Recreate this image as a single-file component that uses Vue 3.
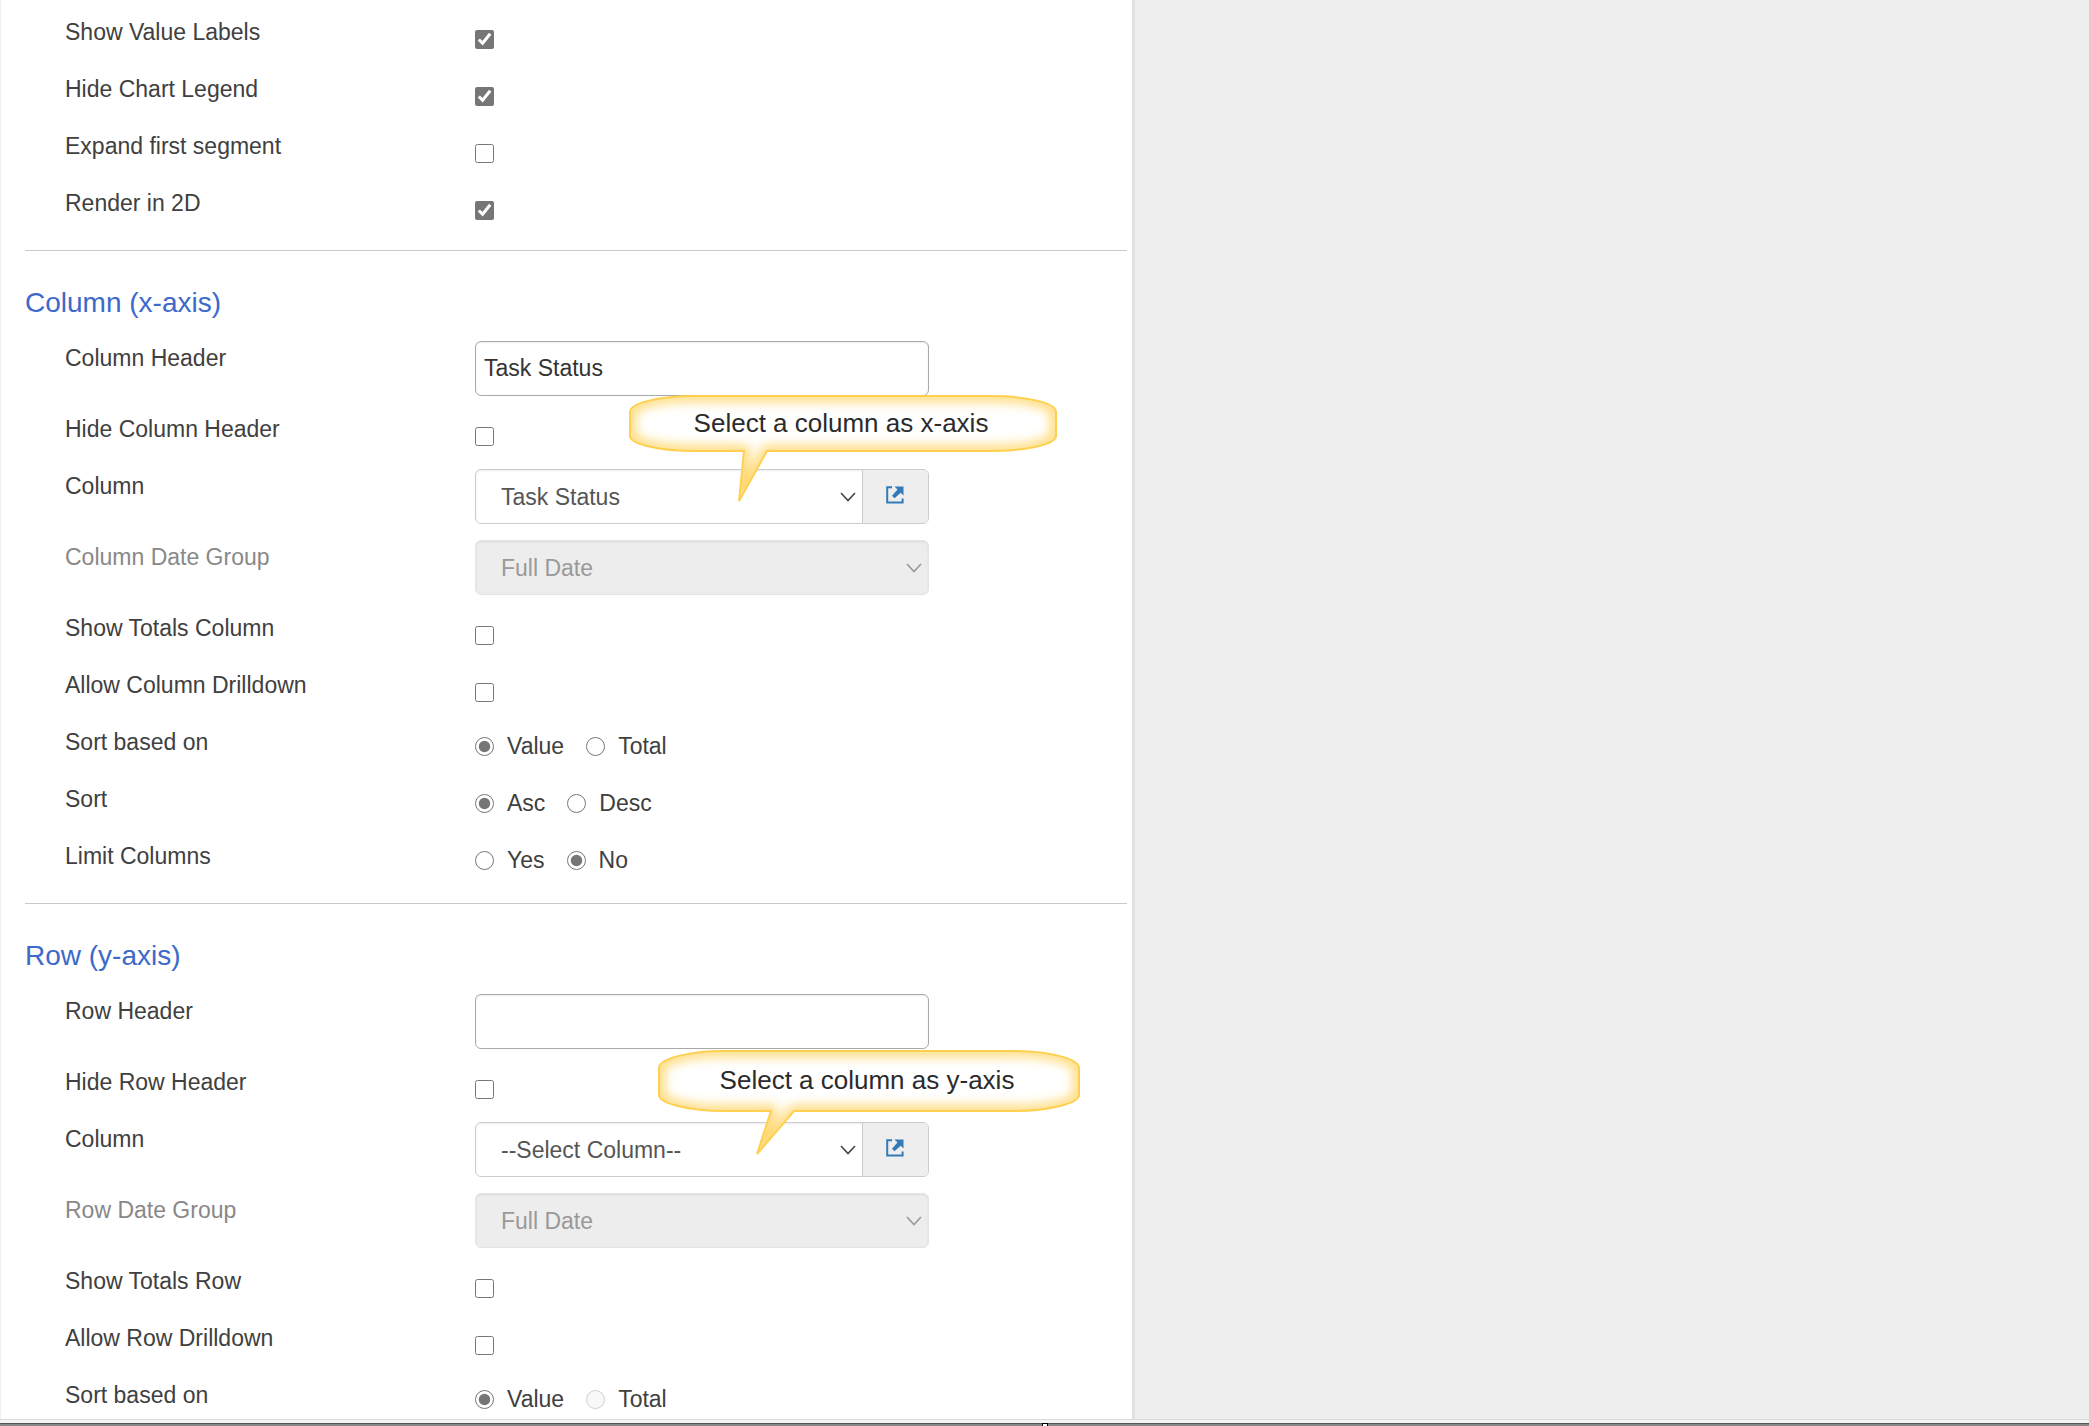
<script setup>
import { reactive } from 'vue'

const sections = reactive([
  {
    id: 'display',
    rows: [
      { type: 'check', label: 'Show Value Labels', value: true },
      { type: 'check', label: 'Hide Chart Legend', value: true },
      { type: 'check', label: 'Expand first segment', value: false },
      { type: 'check', label: 'Render in 2D', value: true },
    ],
  },
  {
    id: 'column',
    title: 'Column (x-axis)',
    rows: [
      { type: 'text', label: 'Column Header', value: 'Task Status' },
      { type: 'check', label: 'Hide Column Header', value: false },
      { type: 'select', label: 'Column', value: 'Task Status', picker: true, tip: 'x' },
      { type: 'select', label: 'Column Date Group', value: 'Full Date', disabled: true },
      { type: 'check', label: 'Show Totals Column', value: false },
      { type: 'check', label: 'Allow Column Drilldown', value: false },
      { type: 'radio', label: 'Sort based on', value: 'Value', options: ['Value', 'Total'] },
      { type: 'radio', label: 'Sort', value: 'Asc', options: ['Asc', 'Desc'] },
      { type: 'radio', label: 'Limit Columns', value: 'No', options: ['Yes', 'No'] },
    ],
  },
  {
    id: 'row',
    title: 'Row (y-axis)',
    rows: [
      { type: 'text', label: 'Row Header', value: '' },
      { type: 'check', label: 'Hide Row Header', value: false },
      { type: 'select', label: 'Column', value: '--Select Column--', picker: true, tip: 'y' },
      { type: 'select', label: 'Row Date Group', value: 'Full Date', disabled: true },
      { type: 'check', label: 'Show Totals Row', value: false },
      { type: 'check', label: 'Allow Row Drilldown', value: false },
      { type: 'radio', label: 'Sort based on', value: 'Value', options: ['Value', 'Total'], locked: ['Total'] },
    ],
  },
])

const tips = {
  x: {
    text: 'Select a column as x-axis',
    width: 428,
    height: 112,
    path: 'M66 1 H362 C398 1 427 8 427 17 V41 C427 49 398 56 362 56 H138 L110 106 L115 56 H66 C30 56 1 49 1 41 V17 C1 8 30 1 66 1 Z',
  },
  y: {
    text: 'Select a column as y-axis',
    width: 422,
    height: 112,
    path: 'M66 1 H356 C392 1 421 9 421 18 V45 C421 53 392 61 356 61 H136 L99 104 L113 61 H66 C30 61 1 53 1 45 V18 C1 9 30 1 66 1 Z',
  },
}

const fieldId = (section, index) => `${section.id}-${index}`
</script>

<template>
  <div class="page">
    <div class="workspace">
      <form class="panel" @submit.prevent>
        <section v-for="section in sections" :key="section.id" class="section">
          <h2 v-if="section.title" class="title">{{ section.title }}</h2>
          <div
            v-for="(row, i) in section.rows"
            :key="i"
            class="row"
            :class="[`row-${row.type}`, { 'row-disabled': row.disabled }]"
          >
            <component
              :is="row.type === 'radio' ? 'span' : 'label'"
              :id="`${fieldId(section, i)}-label`"
              class="label"
              :for="row.type === 'radio' ? undefined : fieldId(section, i)"
            >{{ row.label }}</component>

            <input
              v-if="row.type === 'check'"
              :id="fieldId(section, i)"
              v-model="row.value"
              class="box"
              type="checkbox"
            />

            <input
              v-else-if="row.type === 'text'"
              :id="fieldId(section, i)"
              v-model="row.value"
              class="field text"
              type="text"
            />

            <div
              v-else-if="row.type === 'radio'"
              class="options"
              role="radiogroup"
              :aria-labelledby="`${fieldId(section, i)}-label`"
            >
              <label v-for="option in row.options" :key="option" class="option">
                <input
                  v-model="row.value"
                  class="dot"
                  type="radio"
                  :name="fieldId(section, i)"
                  :value="option"
                  :disabled="row.locked?.includes(option)"
                />
                {{ option }}
              </label>
            </div>

            <div v-else class="field group">
              <div class="select-wrap">
                <select :id="fieldId(section, i)" v-model="row.value" class="select" :disabled="row.disabled">
                  <option>{{ row.value }}</option>
                </select>
                <svg class="chevron" viewBox="0 0 16 10" aria-hidden="true">
                  <path d="M1 1 L8 8.500 L15 1" fill="none" stroke="currentColor" stroke-width="1.600" />
                </svg>
              </div>
              <button v-if="row.picker" class="picker" type="button" aria-label="Open column">
                <svg viewBox="0 0 18 18" width="18" height="18" aria-hidden="true">
                  <path d="M6 1.200 H1.200 V16.600 H16.600 V12.500" fill="none" stroke="currentColor" stroke-width="2" />
                  <path d="M8.500 0.500 H17.500 V9.500 L14.700 6.700 L8.500 12.200 L6 9.700 L11.500 3.500 Z" fill="currentColor" />
                </svg>
              </button>
              <div v-if="row.tip" class="tip" :class="`tip-${row.tip}`">
                <svg
                  class="tip-shape"
                  :width="tips[row.tip].width"
                  :height="tips[row.tip].height"
                  aria-hidden="true"
                >
                  <defs>
                    <clipPath :id="`clip-${row.tip}`"><path :d="tips[row.tip].path" /></clipPath>
                    <filter :id="`glow-${row.tip}`" x="-10%" y="-30%" width="120%" height="160%">
                      <feGaussianBlur stdDeviation="6" />
                    </filter>
                  </defs>
                  <path :d="tips[row.tip].path" fill="#fff" />
                  <g :clip-path="`url(#clip-${row.tip})`">
                    <path
                      :d="tips[row.tip].path"
                      fill="none"
                      stroke="#ffd463"
                      stroke-width="10"
                      :filter="`url(#glow-${row.tip})`"
                    />
                  </g>
                  <path :d="tips[row.tip].path" fill="none" stroke="#ffd04f" stroke-width="2" />
                </svg>
                <span class="tip-text">{{ tips[row.tip].text }}</span>
              </div>
            </div>
          </div>
        </section>
      </form>
    </div>
    <footer class="splitter"><span class="grip"></span></footer>
  </div>
</template>

<style>
body {
  overflow: hidden;
}
</style>

<style scoped>
.page {
  display: flex;
  flex-direction: column;
  height: 100vh;
  font-family: "Liberation Sans", Arial, sans-serif;
  font-size: 23px;
  line-height: 34px;
  color: #404040;
  background: #f3f4f4;
}

.page * {
  box-sizing: border-box;
}

.workspace {
  flex: 1;
  min-height: 0;
  overflow: hidden;
  background: #eee;
  border-bottom: 1px solid #d8dada;
}

.panel {
  width: 1135px;
  max-width: 100%;
  padding: 0 5px 0 24px;
  background: #fff;
  border-left: 1px solid #f0f0f6;
  border-right: 3px solid #e2e2e2;
}

.section {
  padding-bottom: 7px;
  border-bottom: 1px solid #ccc8c8;
}

.section:first-child {
  padding-top: 15px;
}

.title {
  margin: 0;
  padding: 32px 0 18px;
  font-size: 28px;
  font-weight: 400;
  line-height: 40px;
  color: #3d69cb;
}

.row {
  display: grid;
  grid-template-columns: 410px 454px;
  align-items: start;
  min-height: 57px;
  padding-left: 40px;
}

.row-text,
.row-select {
  min-height: 71px;
}

.row-disabled .label {
  color: #888;
}

.box,
.dot {
  width: 19px;
  height: 19px;
  margin: 0;
  accent-color: #767676;
}

.box {
  margin-top: 15px;
}

.options {
  display: flex;
  gap: 22px;
  padding-top: 4px;
}

.option {
  display: flex;
  align-items: center;
  gap: 13px;
}

.field {
  position: relative;
  width: 100%;
  height: 55px;
  border: 1px solid #ccc;
  border-radius: 6px;
  box-shadow: inset 0 1px 2px rgba(0, 0, 0, 0.08);
}

.text {
  padding: 0 8px;
  font: inherit;
  color: #333;
  background: #fff;
  border-color: #a9a9a9;
}

.group {
  display: flex;
}

.select-wrap {
  position: relative;
  flex: 1;
}

.select {
  width: 100%;
  height: 100%;
  padding: 0 40px 0 25px;
  font: inherit;
  color: #555;
  appearance: none;
  background: transparent;
  border: 0;
}

.select:disabled {
  color: #999;
  opacity: 1;
}

.row-disabled .field {
  background: #ededed;
  border-color: #e4e4e4;
}

.chevron {
  position: absolute;
  top: 22px;
  right: 6px;
  width: 16px;
  height: 10px;
  color: #444;
  pointer-events: none;
}

.row-disabled .chevron {
  color: #999;
}

.picker {
  display: flex;
  align-items: center;
  justify-content: center;
  width: 66px;
  padding: 0 1px 3px 0;
  color: #337ab7;
  background: #eee;
  border: 0;
  border-left: 1px solid #ccc;
  border-radius: 0 5px 5px 0;
}

.tip {
  position: absolute;
  z-index: 1;
  pointer-events: none;
}

.tip-x {
  top: -75px;
  left: 153px;
  width: 428px;
}

.tip-y {
  top: -73px;
  left: 182px;
  width: 422px;
}

.tip-shape {
  display: block;
}

.tip-text {
  position: absolute;
  inset: 11px 4px auto 0;
  font-size: 26px;
  text-align: center;
  color: #2b2b2b;
}

.tip-y .tip-text {
  top: 13px;
}

.splitter {
  display: flex;
  justify-content: center;
  height: 6px;
  padding-top: 3px;
  background: linear-gradient(#f3f4f4 3px, #555 3px, #555 4px, #888 4px);
}

.grip {
  width: 6px;
  height: 3px;
  background: #fff;
  border: solid #000;
  border-width: 1px 1px 0;
}
</style>
